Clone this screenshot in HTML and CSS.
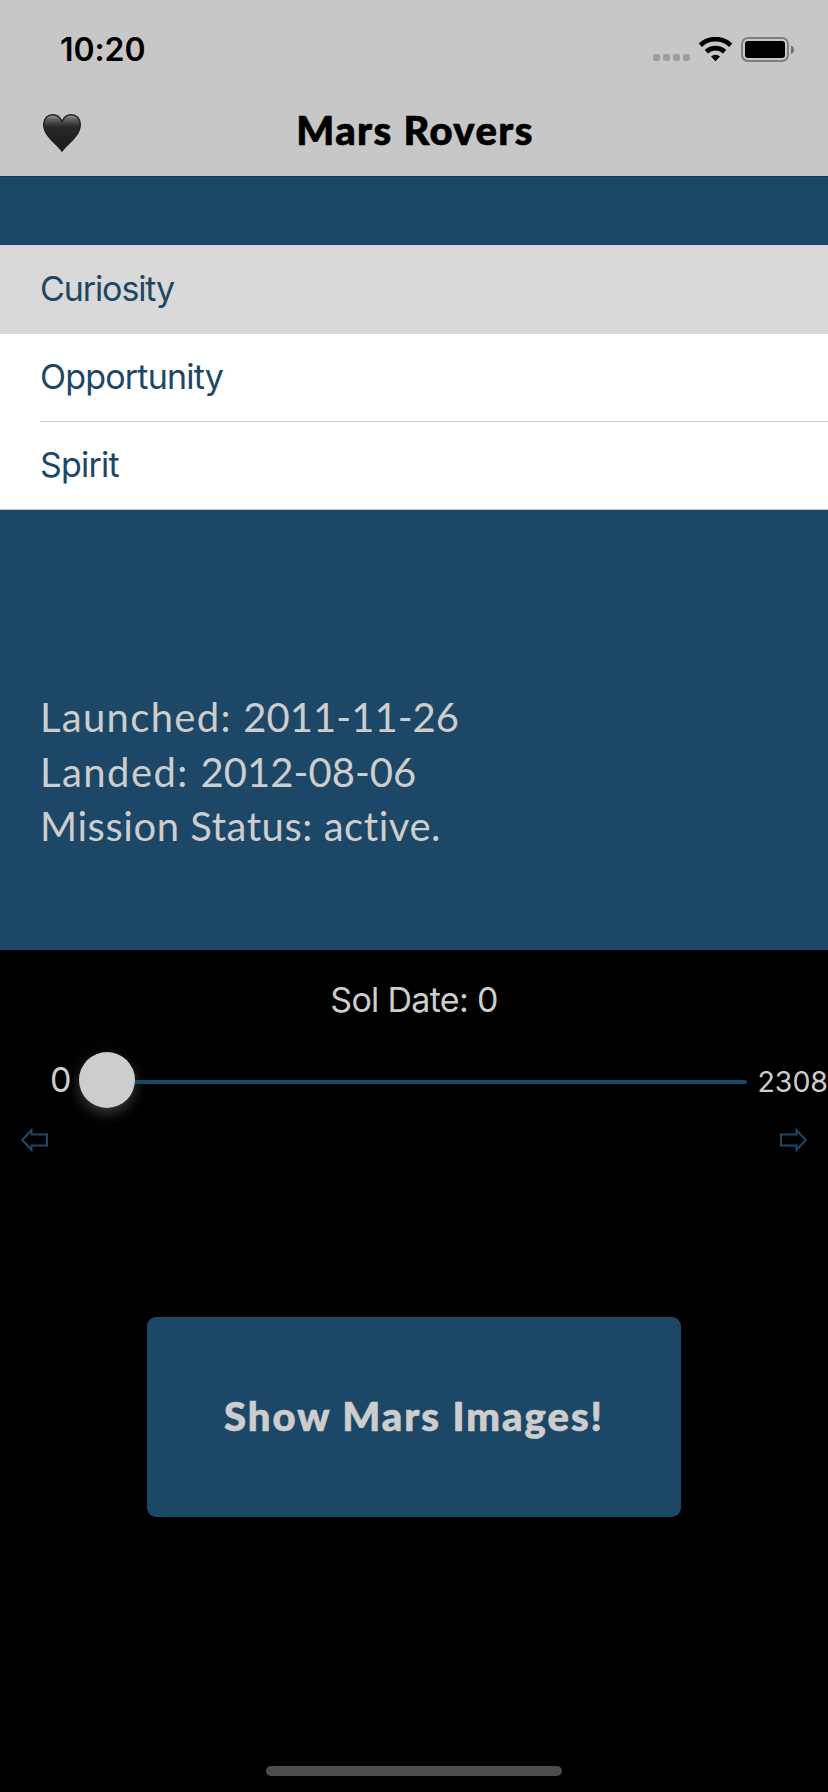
FILE: index.html
```html
<!DOCTYPE html>
<html lang="en">
<head>
<meta charset="utf-8">
<title>Mars Rovers</title>
<link rel="stylesheet" href="styles.css">
</head>
<body>
<div class="screen">
  <header class="header">
    <div class="status-bar">
      <span class="time">10:20</span>
      <svg class="status-icons" width="142" height="26" viewBox="0 0 142 26">
        <g fill="#9e9e9e">
          <rect x="0" y="17" width="7" height="7" rx="2"/>
          <rect x="10" y="17" width="7" height="7" rx="2"/>
          <rect x="20" y="17" width="7" height="7" rx="2"/>
          <rect x="30" y="17" width="7" height="7" rx="2"/>
        </g>
        <g fill="none" stroke="#000" stroke-width="4.8">
          <path d="M47.300 8.200A22.300 22.300 0 0 1 77.700 8.200"/>
          <path d="M53.400 14.700A13.500 13.500 0 0 1 71.600 14.700"/>
        </g>
        <path d="M58 19.500A6.600 6.600 0 0 1 67 19.500L62.500 24.200Z"/>
        <rect x="89" y="1" width="46" height="23" rx="6" fill="none" stroke="#7d7d7d" stroke-width="2"/>
        <rect x="92" y="4" width="40" height="17" rx="3"/>
        <path d="M138 8.500Q141 9.500 141 12.700T138 17Z" fill="#6f6f6f"/>
      </svg>
    </div>
    <div class="nav-bar">
      <svg class="heart" width="38" height="38" viewBox="0 0 38 38">
        <defs>
          <linearGradient id="shade" x1="0" y1="0" x2="0" y2="1">
            <stop offset="0" stop-color="#a0a0a0"/>
            <stop offset=".13" stop-color="#606060"/>
            <stop offset=".33" stop-color="#292929"/>
            <stop offset="1" stop-color="#1a1a1a"/>
          </linearGradient>
        </defs>
        <path d="M19 37C14 30 .700 22 .700 10.500C.700 4.500 4.700.700 9.700.700C14 .700 17.300 3.500 19 7.500C20.700 3.500 24 .700 28.300.700C33.300.700 37.300 4.500 37.300 10.500C37.300 22 24 30 19 37Z" fill="url(#shade)" stroke="#202020" stroke-width="1.400"/>
      </svg>
      <h1 class="title">Mars Rovers</h1>
    </div>
  </header>
  <main>
    <section class="rovers">
      <ul class="rover-list">
        <li class="rover selected"><span class="curiosity">Curiosity</span></li>
        <li class="rover"><span class="opportunity">Opportunity</span></li>
        <li class="rover"><span class="spirit">Spirit</span></li>
      </ul>
      <div class="mission">
        <p class="launched">Launched: <span class="date">2011-11-26</span></p>
        <p class="landed">Landed: <span class="date">2012-08-06</span></p>
        <p class="state">Mission Status: active.</p>
      </div>
    </section>
    <section class="controls">
      <p class="sol">Sol Date: 0</p>
      <div class="slider-row">
        <span class="min">0</span>
        <div class="slider"><div class="knob"></div><div class="track"></div></div>
        <span class="max">2308</span>
      </div>
      <div class="steps">
        <svg width="28" height="24" viewBox="0 0 28 24"><path class="arrow" d="M1.200 12L10.500 2V6.500H26V17.500H10.500V22Z"/></svg>
        <svg width="28" height="24" viewBox="0 0 28 24"><path class="arrow" d="M26.800 12L17.500 2V6.500H2V17.500H17.500V22Z"/></svg>
      </div>
      <button class="show">Show Mars Images!</button>
    </section>
  </main>
  <div class="home-indicator"></div>
</div>
</body>
</html>
```
FILE: styles.css
```css
* { box-sizing: border-box; margin: 0; padding: 0; }
body { background: #000; font-family: Inter, sans-serif; }
.screen { width: 828px; height: 1792px; background: #000; color: #cdcdcd; display: flex; flex-direction: column; overflow: hidden; }
.header { height: 176px; background: #c7c7c7; color: #000; }
.status-bar { height: 88px; display: flex; justify-content: space-between; padding: 30px 33px 0 60px; }
.time { font-size: 32px; font-weight: 600; line-height: 40px; letter-spacing: -.1px; }
.status-icons { margin-top: 7px; }
.nav-bar { height: 88px; display: grid; grid-template-columns: 120px 1fr 120px; align-items: start; }
.heart { margin: 26px 0 0 43px; }
.title { font: 900 40px/48px Lato, sans-serif; letter-spacing: 1.4px; -webkit-text-stroke: .7px #000; text-align: center; margin-top: 18px; padding-left: 2px; white-space: nowrap; }
.rovers { height: 774px; background: #1c4766; border-top: 1px solid #173b55; padding-top: 68px; }
.rover-list { list-style: none; background: #fff; color: #1c4766; border-bottom: 1px solid #c8c7cc; }
.rover { height: 88px; font-size: 34px; line-height: 85px; letter-spacing: -.8px; margin-left: 40px; white-space: nowrap; }
.rover.selected { height: 89px; line-height: 87px; letter-spacing: -1.1px; margin-left: 0; padding-left: 40px; background: #d9d9d9; }
.rover:nth-child(2) { border-bottom: 1px solid #c8c7cc; }
.rover:nth-child(3) { height: 87px; }
.mission { padding: 180px 0 0 40px; font: 400 40px/54.5px Lato, sans-serif; font-variant-ligatures: none; white-space: nowrap; }
.launched { letter-spacing: 1.3px; }
.landed { letter-spacing: 1.45px; }
.date { letter-spacing: .05px; }
.state { letter-spacing: .55px; }
.controls { height: 816px; display: flex; flex-direction: column; }
.sol { font-size: 34px; line-height: 40px; letter-spacing: -.7px; margin-top: 30px; text-align: center; }
.slider-row { height: 56px; margin-top: 32px; display: flex; align-items: center; padding-left: 50px; }
.min { width: 29px; font-size: 34px; line-height: 56px; }
.slider { width: 669px; display: flex; align-items: center; }
.knob { width: 56px; height: 56px; flex: none; border-radius: 50%; background: #cdcdcd; box-shadow: 0 6px 13px rgba(205,205,205,.24), 0 1px 22px rgba(205,205,205,.07); }
.track { height: 4px; flex: 1; margin-top: 4px; background: #1c4766; border-radius: 0 2px 2px 0; }
.max { margin: 4px 0 0 10px; font-size: 28.5px; line-height: 40px; }
.steps { display: flex; justify-content: space-between; padding: 0 21px; margin-top: 20px; }
.arrow { fill: none; stroke: #1c4766; stroke-width: 2; }
.show { width: 534px; height: 200px; margin: 165px auto 0; border: 0; border-radius: 9px; background: #1c4766; color: #cdcdcd; font: 900 40px/48px Lato, sans-serif; letter-spacing: 2px; -webkit-text-stroke: .7px #cdcdcd; padding-bottom: 2px; white-space: nowrap; }
.home-indicator { width: 296px; height: 10px; margin: 0 auto; border-radius: 5px; background: #4c4c4c; }
```
